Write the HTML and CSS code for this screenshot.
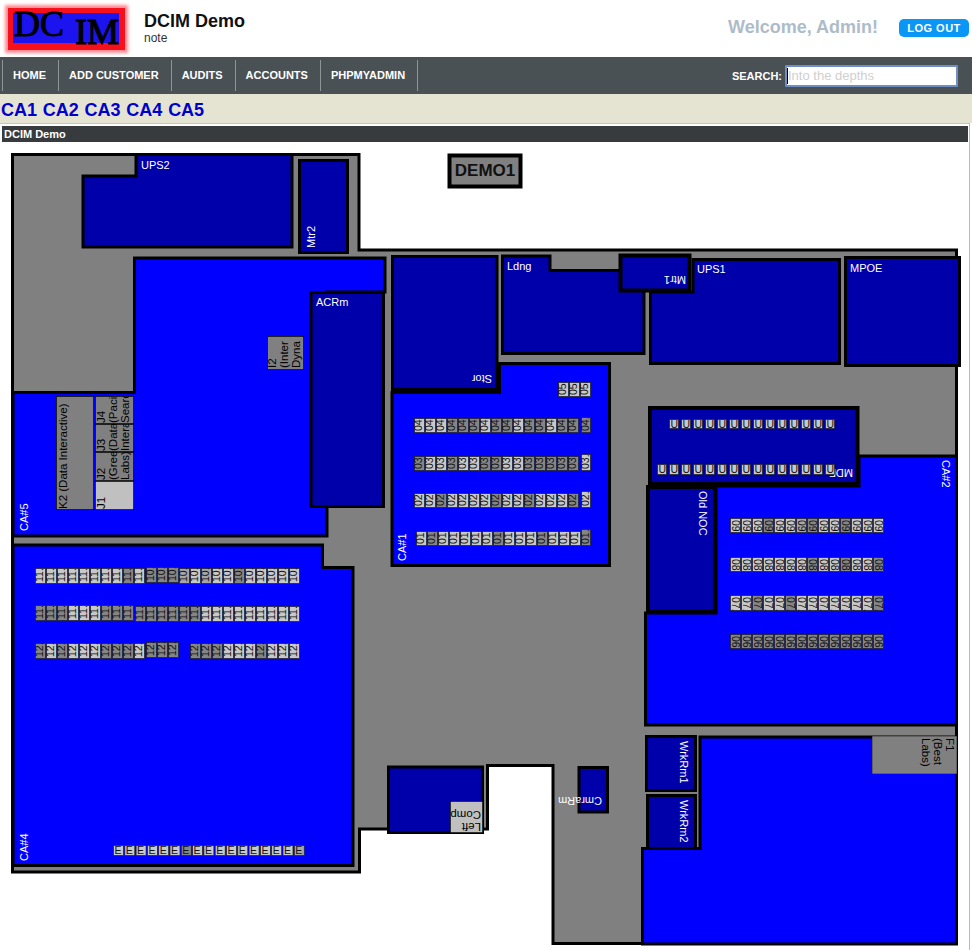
FILE: index.html
```html
<!DOCTYPE html>
<html>
<head>
	<meta charset="UTF-8">
	<title>DCIM Demo</title>
	<link rel="stylesheet" href="styles.css">
</head>
<body>
<div class="header">
	<div class="logo"><span class="logo-dc">DC</span><span class="logo-im">IM</span></div>
	<div class="site">
		<div class="site-name">DCIM Demo</div>
		<div class="site-note">note</div>
	</div>
	<div class="welcome">Welcome, Admin!</div>
	<a class="logout" href="#">LOG OUT</a>
</div>
<div class="nav">
	<ul class="menu">
		<li><a href="#">Home</a></li>
		<li><a href="#">Add Customer</a></li>
		<li><a href="#">Audits</a></li>
		<li><a href="#">Accounts</a></li>
		<li><a href="#">phpMyAdmin</a></li>
	</ul>
	<label class="search">Search: <input type="text" placeholder="Into the depths"></label>
</div>
<div class="sites">
	<a href="#">CA1</a>
	<a href="#">CA2</a>
	<a href="#">CA3</a>
	<a href="#">CA4</a>
	<a href="#">CA5</a>
</div>
<div class="panel">
	<div class="panel-title">DCIM Demo</div>
	<svg class="plan" viewBox="1 142 968 808" width="968" height="808">
		<!-- building -->
		<polygon class="floor" points="12.5,154.5 359,154.5 359,250 956.5,250 956.5,943.5 553,943.5 553,765.5 487.5,765.5 487.5,829 359.5,829 359.5,872 12.5,872"/>

		<!-- cages -->
		<polygon class="cage" points="134.5,258 385,258 385,292 327,292 327,536 13,536 13,392.5 134.5,392.5"/>
		<polygon class="cage" points="13,545 322.5,545 322.5,567.5 353,567.5 353,865.5 13,865.5"/>
		<polygon class="cage" points="392,392.5 499.5,392.5 499.5,363.5 609.5,363.5 609.5,565.5 392,565.5"/>
		<polygon class="cage" points="859,456 956.5,456 956.5,725 645.5,725 645.5,613 716,613 716,486 859,486"/>
		<polygon class="cage" points="700,737 956.5,737 956.5,944 642.5,944 642.5,848.5 700,848.5"/>

		<!-- rooms -->
		<polygon class="room" points="136,154.5 292,154.5 292,247 83,247 83,176 136,176"/>
		<rect class="room" x="299.5" y="160.5" width="48" height="92"/>
		<rect class="room" x="311" y="292.5" width="72.5" height="214"/>
		<rect class="room" x="392.5" y="256.5" width="104.5" height="133"/>
		<polygon class="room" points="502.5,256 550,256 550,270.5 644,270.5 644,353.5 502.5,353.5"/>
		<polygon class="room" points="693,259.5 839.5,259.5 839.5,363.5 650.5,363.5 650.5,292 693,292"/>
		<rect class="room thick" x="620.5" y="255.5" width="69" height="35"/>
		<rect class="room" x="845.5" y="257.5" width="114" height="108"/>
		<rect class="room thick" x="650" y="408" width="207.5" height="76"/>
		<rect class="room thick" x="648" y="487" width="67" height="125"/>
		<rect class="room" x="388.5" y="767" width="94" height="65.5"/>
		<rect class="room" x="579" y="767.5" width="28.5" height="44.5"/>
		<rect class="room" x="646.5" y="736.5" width="49" height="54"/>
		<rect class="room" x="647.5" y="795.5" width="48" height="53"/>

		<!-- demo sign -->
		<rect class="sign" x="449.5" y="155.5" width="71" height="31"/>
		<text class="sign-text" x="485" y="176">DEMO1</text>

		<!-- room names -->
		<text class="name" x="141" y="169">UPS2</text>
		<text class="name" transform="translate(315,248) rotate(-90)">Mtr2</text>
		<text class="name" x="316" y="306">ACRm</text>
		<text class="name" transform="translate(492,375) rotate(180)">Stor</text>
		<text class="name" x="507" y="270">Ldng</text>
		<text class="name" transform="translate(686,276) rotate(180)">Mtr1</text>
		<text class="name" x="697" y="273">UPS1</text>
		<text class="name" x="850" y="272">MPOE</text>
		<text class="name" transform="translate(853,469) rotate(180)">MDF</text>
		<text class="name" transform="translate(699,491) rotate(90)">Old NOC</text>
		<text class="name" transform="translate(942,460) rotate(90)">CA#2</text>
		<text class="name" transform="translate(28,531) rotate(-90)">CA#5</text>
		<text class="name" transform="translate(28,861) rotate(-90)">CA#4</text>
		<text class="name" transform="translate(406,561) rotate(-90)">CA#1</text>
		<text class="name" transform="translate(680,741) rotate(90)">WrkRm1</text>
		<text class="name" transform="translate(680,800) rotate(90)">WrkRm2</text>
		<text class="name" transform="translate(602,797) rotate(180)">CmraRm</text>

		<g id="cabinets"></g>

		<!-- tenant spaces -->
		<svg x="267" y="336" width="37" height="34">
			<rect class="tenant" width="37" height="34"/>
			<text class="tenant-text" transform="translate(9,32) rotate(-90)"><tspan x="0" y="0">I2</tspan><tspan x="0" y="12">(Inter</tspan><tspan x="0" y="24">Dyna</tspan></text>
		</svg>
		<svg x="56" y="396" width="38" height="114">
			<rect class="tenant" width="38" height="114"/>
			<text class="tenant-text" transform="translate(11,113) rotate(-90)">K2 (Data Interactive)</text>
		</svg>
		<svg x="95" y="396" width="39" height="28">
			<rect class="tenant" width="39" height="28"/>
			<text class="tenant-text" transform="translate(10,27) rotate(-90)"><tspan x="0" y="0">J4</tspan><tspan x="0" y="12">(Pacific</tspan><tspan x="0" y="24">Search</tspan></text>
		</svg>
		<svg x="95" y="424" width="39" height="28">
			<rect class="tenant" width="39" height="28"/>
			<text class="tenant-text" transform="translate(10,27) rotate(-90)"><tspan x="0" y="0">J3</tspan><tspan x="0" y="12">(Data</tspan><tspan x="0" y="24">Interactive</tspan></text>
		</svg>
		<svg x="95" y="452" width="39" height="29">
			<rect class="tenant" width="39" height="29"/>
			<text class="tenant-text" transform="translate(10,28) rotate(-90)"><tspan x="0" y="0">J2</tspan><tspan x="0" y="12">(Green</tspan><tspan x="0" y="24">Labs)</tspan></text>
		</svg>
		<svg x="95" y="481" width="39" height="29">
			<rect class="tenant light" width="39" height="29"/>
			<text class="tenant-text" transform="translate(10,28) rotate(-90)">J1</text>
		</svg>
		<svg x="872" y="736" width="85" height="38">
			<rect class="tenant plain" width="85" height="38"/>
			<text class="tenant-text" transform="translate(74,2) rotate(90)"><tspan x="0" y="0">F1</tspan><tspan x="0" y="12">(Best</tspan><tspan x="0" y="24">Labs)</tspan></text>
		</svg>
		<svg x="450" y="801" width="33" height="32">
			<rect class="tenant light" width="33" height="32"/>
			<text class="tenant-text" transform="translate(31,22) rotate(180)"><tspan x="0" y="0">Left</tspan><tspan x="0" y="12">Comp</tspan></text>
		</svg>
	</svg>
</div>
<script src="plan.js"></script>
</body>
</html>
```
FILE: styles.css
```css
html, body {
	margin: 0;
	padding: 0;
	background: #fff;
}
body {
	font-family: "Liberation Sans", Arial, sans-serif;
	color: #111;
}
a {
	text-decoration: none;
}

.header {
	display: flex;
	align-items: center;
	height: 57px;
	padding: 0 3px 0 8px;
	box-sizing: border-box;
}
.logo {
	display: flex;
	justify-content: space-between;
	width: 106px;
	height: 30px;
	margin-top: 1px;
	background: #1c14ee;
	border: 5px solid #f5101c;
	border-width: 5px 6px 7px 5px;
	box-shadow: 0 0 3px 3px #ff8a92;
	font-family: "Liberation Serif", serif;
	font-size: 36px;
	color: #000;
	-webkit-text-stroke: 1px #000;
	line-height: 30px;
	flex: none;
}
.logo-dc {
	margin-top: -4px;
	margin-left: 1px;
}
.logo-im {
	margin-top: 4px;
}
.site {
	margin-left: 19px;
}
.site-name {
	font-size: 18px;
	font-weight: bold;
	line-height: 20px;
}
.site-note {
	font-size: 12px;
	line-height: 15px;
	color: #333;
}
.welcome {
	margin-left: auto;
	margin-bottom: 2px;
	font-size: 18px;
	font-weight: bold;
	color: #aebcc9;
}
.logout {
	margin-left: 21px;
	margin-bottom: 2px;
	width: 70px;
	height: 18px;
	border-radius: 5px;
	background: #0a96f7;
	color: #fff;
	font-size: 11px;
	font-weight: bold;
	letter-spacing: 0.5px;
	line-height: 18px;
	text-align: center;
}

.nav {
	display: flex;
	align-items: center;
	justify-content: space-between;
	height: 37px;
	background: #4a5155;
	padding-left: 2px;
	padding-right: 14px;
}
.menu {
	display: flex;
	list-style: none;
	margin: 0;
	padding: 0;
	border-left: 1px solid #8f9496;
}
.menu li {
	border-right: 1px solid #8f9496;
}
.menu a {
	display: block;
	height: 31px;
	line-height: 31px;
	padding: 0 12px 0 10px;
	color: #fff;
	font-size: 11px;
	font-weight: bold;
	text-transform: uppercase;
}
.search {
	display: flex;
	align-items: center;
	gap: 3px;
	color: #fff;
	font-size: 11px;
	font-weight: bold;
	text-transform: uppercase;
}
.search input {
	width: 173px;
	height: 22px;
	box-sizing: border-box;
	padding: 0 1px;
	border: 2px solid #6f8fc4;
	border-radius: 1px;
	outline: none;
	background: #fff linear-gradient(#000, #000) 0 1px / 1px 16px no-repeat;
	font-family: "Liberation Sans", Arial, sans-serif;
	font-size: 13px;
}
.search input::placeholder {
	color: #cfcfcf;
	opacity: 1;
}

.sites {
	height: 29px;
	box-sizing: border-box;
	background: #e5e4d3;
	padding-left: 1px;
	line-height: 32px;
	font-size: 18px;
	font-weight: bold;
	word-spacing: 0.75px;
}
.sites a {
	color: #0000cc;
}

.panel {
	width: 970px;
	box-sizing: border-box;
	border-top: 1px solid #c6c6bc;
	border-right: 1px solid #b9b9b9;
	padding-left: 1px;
}
.panel-title {
	margin: 2px 0 0 1px;
	width: 966px;
	height: 16px;
	padding-left: 2px;
	box-sizing: border-box;
	background: #373b3e;
	color: #fff;
	font-size: 11px;
	font-weight: bold;
	line-height: 16px;
}
.plan {
	display: block;
	font-family: "Liberation Sans", Arial, sans-serif;
}

.floor {
	fill: #808080;
	stroke: #000;
	stroke-width: 3;
}
.cage {
	fill: #0000ff;
	stroke: #000;
	stroke-width: 3;
}
.room {
	fill: #0000aa;
	stroke: #000;
	stroke-width: 3;
}
.thick {
	stroke-width: 4;
}
.sign {
	fill: #808080;
	stroke: #000;
	stroke-width: 4;
}
.sign-text {
	font-size: 17px;
	font-weight: bold;
	text-anchor: middle;
	fill: #111;
}
.name {
	font-size: 11px;
	fill: #fff;
}
.tenant {
	fill: #808080;
	stroke: #000;
	stroke-width: 1.5;
}
.tenant.light {
	fill: #c0c0c0;
}
.tenant.plain {
	stroke-width: 0.5;
}
.tenant-text {
	font-size: 11.5px;
	fill: #000;
}
.cab-l {
	fill: #c8c8c8;
}
.cab-m {
	fill: #a6a6a6;
}
.cab-d {
	fill: #858585;
}
.cab-box {
	stroke: #222;
	stroke-width: 0.75;
}
.cab-text {
	font-size: 10.5px;
	fill: #111;
}
```
FILE: plan.js
```js
// cabinet rows: start x, y, step, width, height, label, rotation, shades (L/M/D)
var rows = [
	// CA#1
	[558, 382, 11, 11, 15, "05", -90, "LLL"],
	[414, 418, 11, 11, 15, "04", -90, "LLLDDDLDDLDDLDD"],
	[581, 417, 11, 10, 16, "04", -90, "D"],
	[414, 456, 11, 11, 15, "03", -90, "DLLDLLDDLLDDDDD"],
	[581, 454, 11, 10, 17, "03", -90, "L"],
	[414, 493, 11, 11, 15, "02", -90, "LLDLLLLDLLDLLLD"],
	[581, 491, 11, 10, 17, "02", -90, "L"],
	[416, 531, 11, 11, 15, "01", -90, "LDLLLLLDLLLDLLL"],
	[581, 529, 11, 10, 17, "01", -90, "D"],
	// CA#2
	[730, 518, 11, 11, 15, "09", 90, "LLLDLLMDLLDLLL"],
	[730, 557, 11, 11, 15, "08", 90, "LLLLLLLDLLDLLD"],
	[730, 595, 11, 11, 16, "07", 90, "LLDLLDLLLLLLLD"],
	[730, 634, 11, 11, 15, "06", 90, "DDDDDDDDDDDDDD"],
	// MDF
	[669, 419, 12, 10, 10, "U", 0, "LLLLLLLLLLLLLL"],
	[657, 464, 12, 10, 11, "U", 0, "LLLLLLLLLLLLLLL"],
	// CA#4
	[35, 568, 11, 11, 16, "11", -90, "LLLLLLLLDL"],
	[146, 567, 11, 11, 16, "10", -90, "DDD"],
	[179, 568, 11, 11, 16, "10", -90, "MLMLLDLLLLL"],
	[35, 605, 11, 11, 16, "11", -90, "DDDLLLDDD"],
	[135, 606, 11, 11, 16, "11", -90, "DDDDDDLLLLLLLLL"],
	[35, 643, 11, 11, 16, "12", -90, "DLDLLLDDDL"],
	[146, 642, 11, 11, 16, "12", -90, "DDD"],
	[190, 643, 11, 11, 16, "12", -90, "DDDLLLDLLL"],
	[113, 845, 11.3, 11, 11, "E", 0, "LLLLLLDLLLLLLLLLM"]
];

var NS = "http://www.w3.org/2000/svg";

function el(name, attrs, parent) {
	var node = document.createElementNS(NS, name);
	for (var k in attrs) node.setAttribute(k, attrs[k]);
	parent.appendChild(node);
	return node;
}

function spot(rot, h) {
	if (rot < 0) return "translate(8," + (h - 2) + ") rotate(-90)";
	if (rot > 0) return "translate(2,2) rotate(90)";
	return "translate(1.5,9)";
}

var group = document.getElementById("cabinets");

rows.forEach(function (r) {
	var shades = r[7];
	for (var i = 0; i < shades.length; i++) {
		var w = r[3], h = r[4];
		var cab = el("svg", { x: r[0] + i * r[2], y: r[1], width: w, height: h }, group);
		el("rect", { "class": "cab-box cab-" + shades[i].toLowerCase(), x: 0.5, y: 0.5, width: w - 1, height: h - 1 }, cab);
		var text = el("text", { "class": "cab-text", transform: spot(r[6], h) }, cab);
		text.textContent = r[6] === 0 ? r[5] : r[5] + "." + (i + 1);
	}
});
```
